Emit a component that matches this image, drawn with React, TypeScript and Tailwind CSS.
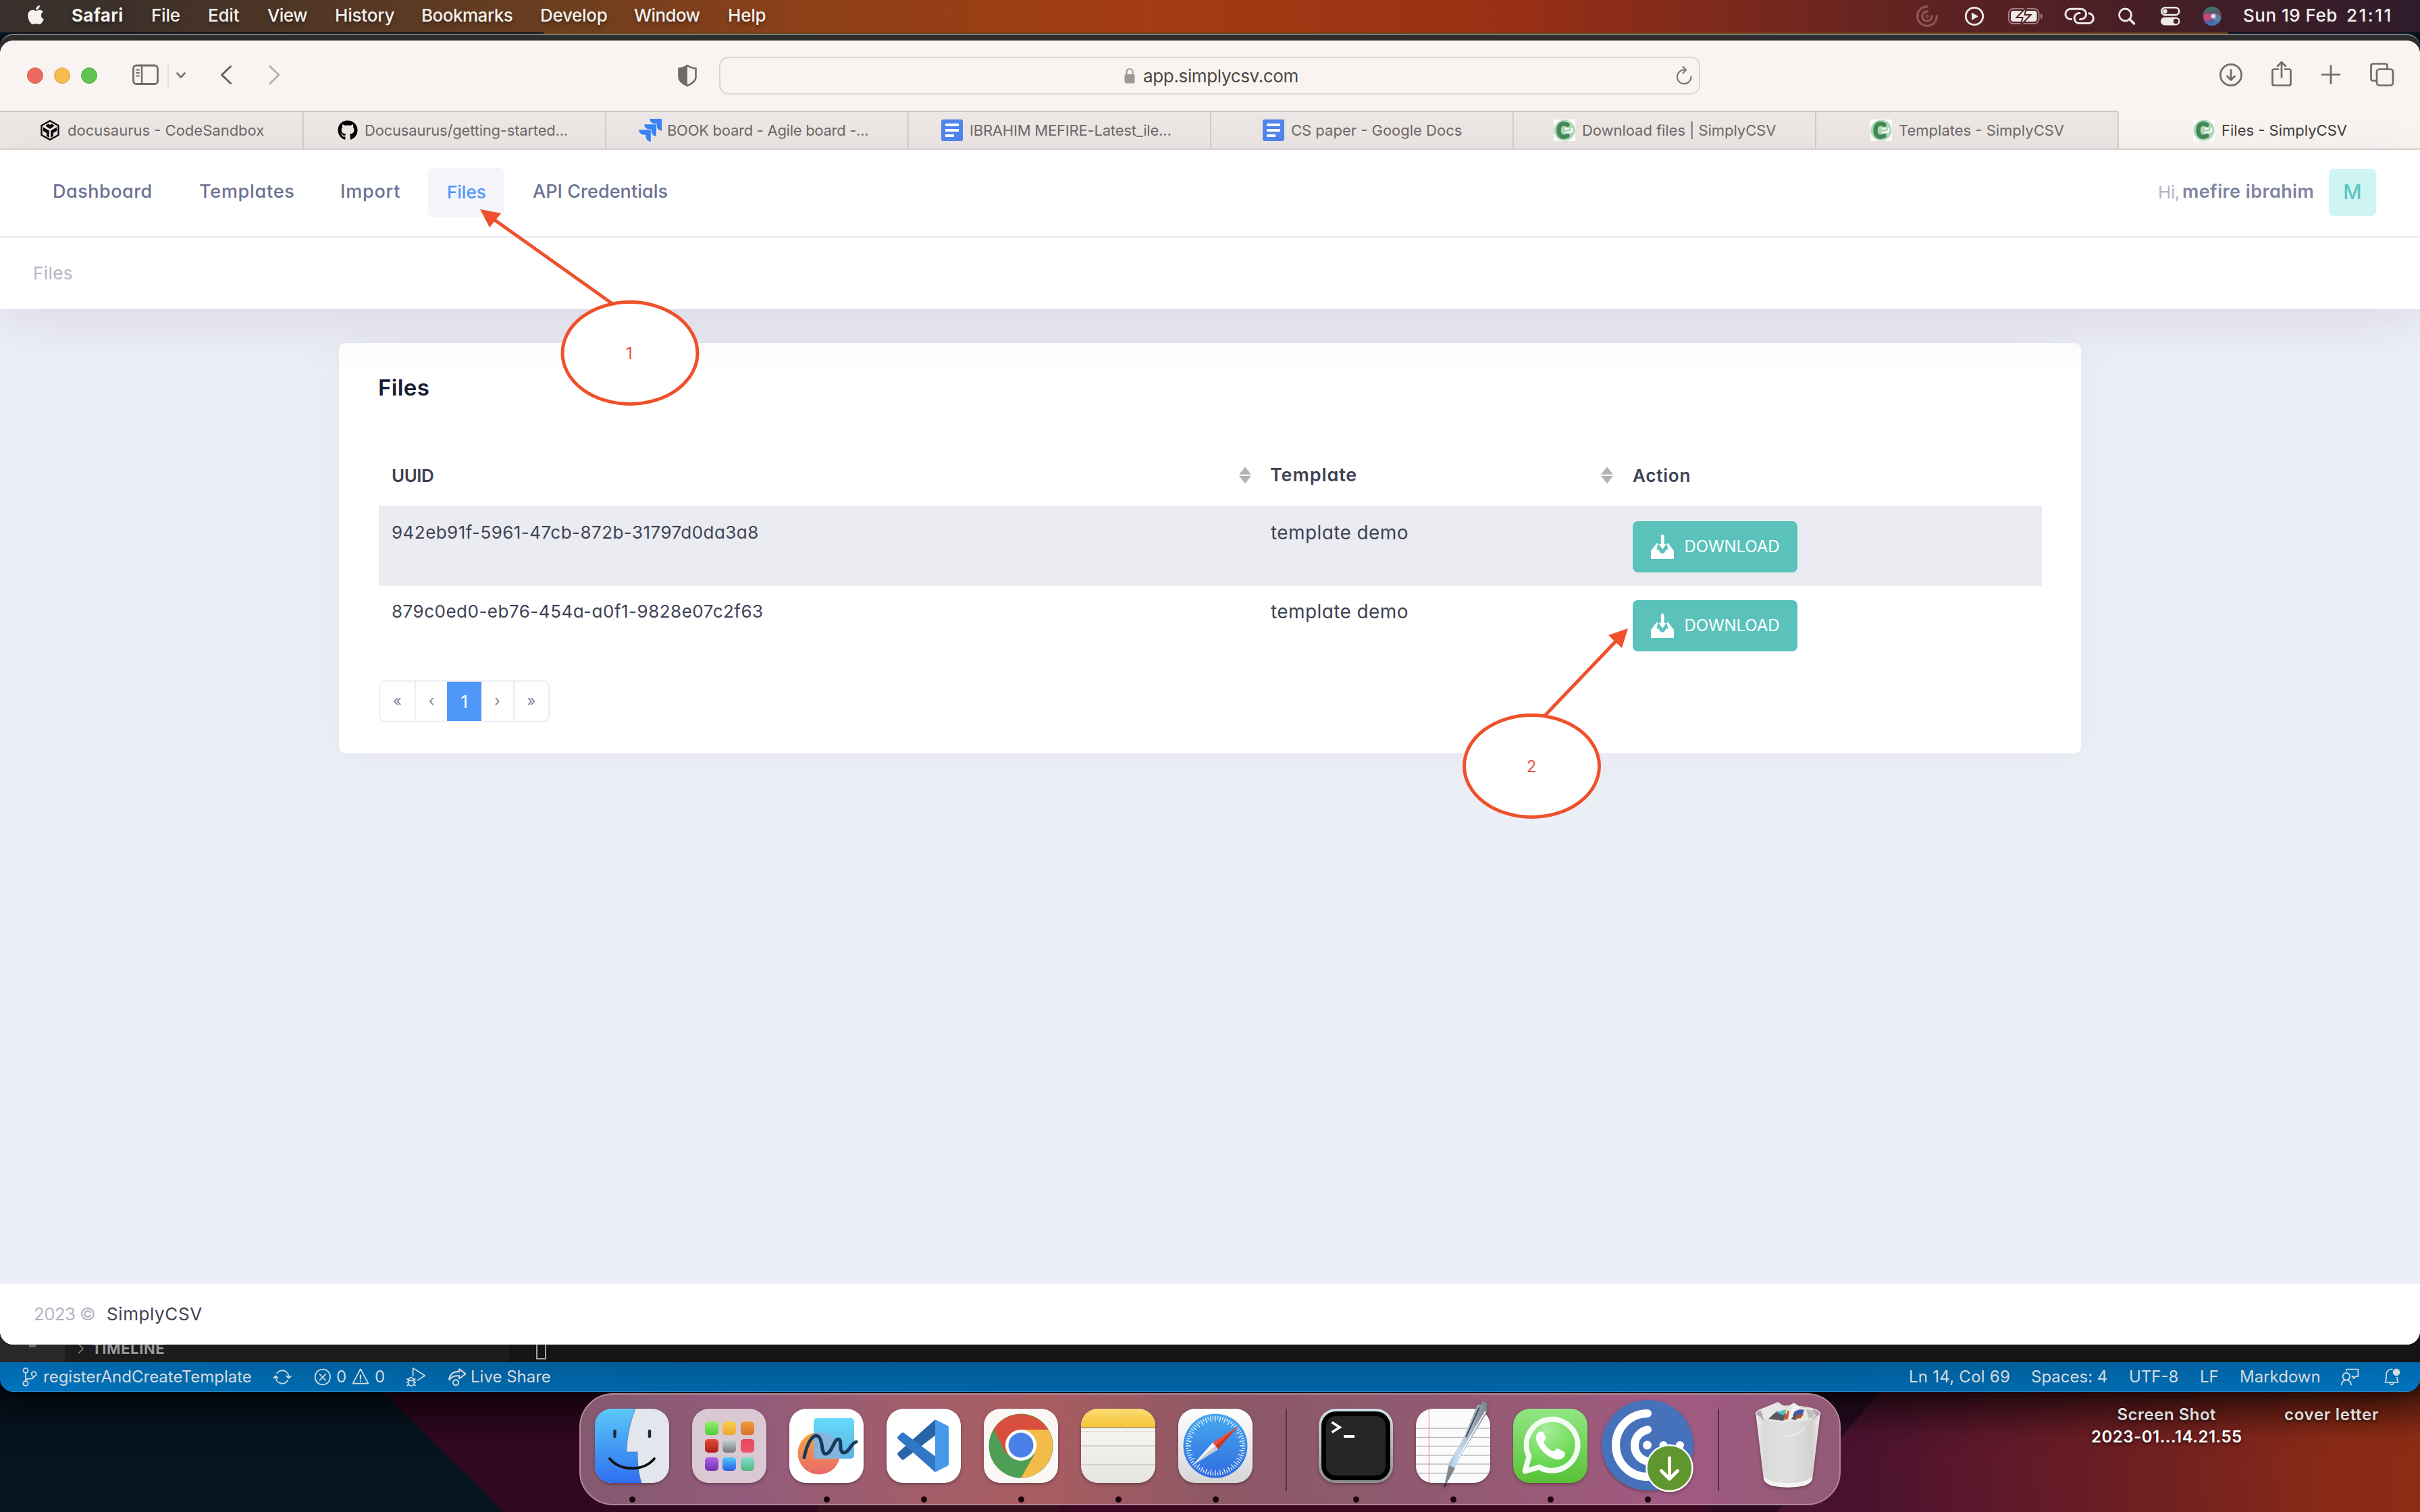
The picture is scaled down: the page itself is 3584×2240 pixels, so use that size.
import type { ReactNode } from "react";
import { FaApple, FaGithub } from "react-icons/fa";
import { SiJira } from "react-icons/si";
import {
  VscBellDot,
  VscChevronRight,
  VscDebugAlt,
  VscError,
  VscFeedback,
  VscLiveShare,
  VscSourceControl,
  VscSync,
  VscWarning,
} from "react-icons/vsc";

function Label({ className = "", children }: { className?: string; children: ReactNode }) {
  return <span className={"block shrink-0 whitespace-nowrap " + className}>{children}</span>;
}

/* ---------- Desktop ---------- */

function Wallpaper() {
  return (
    <svg className="absolute inset-0 h-full w-full" viewBox="0 0 3584 2240" fill="none">
      <defs>
        <linearGradient id="wall-right" gradientUnits="userSpaceOnUse" x1="2720" y1="2150" x2="3584" y2="2100">
          <stop offset="0" stopColor="#47112f" />
          <stop offset="0.25" stopColor="#5c182b" />
          <stop offset="0.55" stopColor="#702020" />
          <stop offset="0.85" stopColor="#8a2a17" />
          <stop offset="1" stopColor="#8c2c14" />
        </linearGradient>
        <linearGradient id="wall-shade" x1="0" y1="0" x2="0" y2="1">
          <stop offset="0" stopColor="#000" stopOpacity="0.62" />
          <stop offset="0.4" stopColor="#000" stopOpacity="0.25" />
          <stop offset="1" stopColor="#000" stopOpacity="0" />
        </linearGradient>
      </defs>
      <rect width="3584" height="2240" fill="#061421" />
      <path d="M805 48H3300V52H805Z" fill="#7c4a18" />
      <path d="M548 2040C610 2110 690 2180 745 2240H1212L1180 2040Z" fill="#300820" />
      <path d="M1212 2040H1568V2240H1212Z" fill="#37101b" />
      <path d="M1568 2040H2540V2240H1568Z" fill="#38071f" />
      <path d="M2500 2040L2530 2240H2640L2810 2040Z" fill="#2a0b22" />
      <path d="M2803 2040L2632 2240H3584V2040Z" fill="url(#wall-right)" />
      <rect y="2050" width="3584" height="80" fill="url(#wall-shade)" />
    </svg>
  );
}

/* ---------- Menu bar ---------- */

const menus: [string, string][] = [
  ["File", "ml-[41px] w-[43px] tracking-[-0.2px]"],
  ["Edit", "ml-[41px] w-[46px] tracking-[-0.2px]"],
  ["View", "ml-[42px] w-[58px] tracking-[-0.6px]"],
  ["History", "ml-[42px] w-[87px] tracking-[-0.2px]"],
  ["Bookmarks", "ml-[41px] w-[134px] tracking-[-0.5px]"],
  ["Develop", "ml-[42px] w-[98px] tracking-[-0.3px]"],
  ["Window", "ml-[41px] w-[96px] tracking-[-0.6px]"],
  ["Help", "ml-[43px] w-[56px] tracking-[-0.2px]"],
];

function StatusIcons() {
  return (
    <svg className="h-[48px] w-[460px] shrink-0" viewBox="2836 0 460 48" fill="none">
      <defs>
        <radialGradient id="siri" cx="0.5" cy="0.5" r="0.5">
          <stop offset="0" stopColor="#fff" />
          <stop offset="0.45" stopColor="#d9c8df" />
          <stop offset="1" stopColor="#5b4a86" stopOpacity="0" />
        </radialGradient>
        <linearGradient id="siri-base" x1="0.4" y1="0" x2="0.6" y2="1">
          <stop offset="0" stopColor="#35806a" />
          <stop offset="0.5" stopColor="#6b3f66" />
          <stop offset="1" stopColor="#3a7fd0" />
        </linearGradient>
      </defs>
      <g stroke="#8b5554" strokeWidth="3.4" strokeLinecap="round">
        <path d="M2854 9.700A14.300 14.300 0 1 0 2868.300 24" />
        <path d="M2854 17A7.200 7.200 0 1 0 2861.200 24" />
        <circle cx="2854" cy="24" r="0.8" />
      </g>
      <circle cx="2924" cy="24" r="12.700" stroke="#efe9e9" strokeWidth="2.800" />
      <path d="M2920 18.500v11.500l10-5.700z" fill="#efe9e9" />
      <rect x="2975" y="13" width="44.500" height="22" rx="6.500" stroke="#a07e80" strokeWidth="2" />
      <path d="M3022 20v8.500c2-.8 3-2.400 3-4.300s-1-3.500-3-4.200z" fill="#a07e80" />
      <rect x="2978" y="16" width="38.500" height="16" rx="4" fill="#efe9e9" />
      <path d="M3001 11L2986.500 26h9l-2.500 11L3007.500 22h-9z" fill="#efe9e9" stroke="#552224" strokeWidth="2" />
      <g stroke="#efe9e9" strokeWidth="3" strokeLinecap="round">
        <path d="M3067.500 28.500h-1a7.600 7.600 0 0 1 0-15.200h15.500a7.600 7.600 0 0 1 0 15.200h-1.500" />
        <path d="M3094 19.800a7.400 7.400 0 0 1-.5 14.700h-15a7.600 7.600 0 0 1 0-15h1.500" />
      </g>
      <circle cx="3147.500" cy="22" r="9" stroke="#efe9e9" strokeWidth="2.800" />
      <path d="M3154 28.500l6.500 6.500" stroke="#efe9e9" strokeWidth="3.600" strokeLinecap="round" />
      <rect x="3201.300" y="11.300" width="26" height="10.800" rx="5.400" stroke="#efe9e9" strokeWidth="2.600" />
      <circle cx="3206.500" cy="16.700" r="3.100" fill="#efe9e9" />
      <rect x="3200" y="25.500" width="28.500" height="12" rx="6" fill="#efe9e9" />
      <circle cx="3222.500" cy="31.500" r="3.700" fill="#45202a" />
      <circle cx="3276" cy="24" r="14" fill="url(#siri-base)" />
      <circle cx="3269.500" cy="25" r="6" fill="#e0467f" fillOpacity="0.8" />
      <circle cx="3283" cy="26" r="6" fill="#4fb0a9" fillOpacity="0.5" />
      <circle cx="3278" cy="24" r="6" fill="url(#siri)" />
    </svg>
  );
}

function MenuBar() {
  return (
    <header className="absolute inset-x-0 top-0 flex h-[48px] items-center bg-[linear-gradient(90deg,#38302c_0px,#3d302a_180px,#6a3e20_800px,#8c4018_1180px,#a53c13_1700px,#9c3014_2200px,#7d291c_2550px,#5c2222_2870px,#4a1f26_3120px,#2f1c2b_3584px)] text-[26px] text-[#f4f1ee]">
      <FaApple className="-mt-[4px] ml-[38px] h-[32px] w-[30px] shrink-0" />
      <div className="-mt-[3px] ml-[38px] flex items-center [text-shadow:0_3px_5px_rgba(0,0,0,0.4)]">
        <Label className="w-[77px] font-bold tracking-[0.3px]">Safari</Label>
        {menus.map(([name, box]) => (
          <Label key={name} className={box + " font-medium"}>{name}</Label>
        ))}
      </div>
      <div className="flex-1" />
      <StatusIcons />
      <div className="-mt-[3px] flex w-[288px] shrink-0 items-center font-medium">
        <Label className="ml-[26px] w-[140px] tracking-[0.5px]">Sun 19 Feb</Label>
        <Label className="ml-[13px] w-[72px] tracking-[2.500px]">21:11</Label>
      </div>
    </header>
  );
}

/* ---------- Editor window behind the browser ---------- */

function EditorWindow() {
  return (
    <div className="absolute top-[50px] left-0 flex h-[2012px] w-full flex-col overflow-hidden rounded-[20px] border-t-2 border-[#7d7d7d] bg-[#2d2d2d] shadow-[0_20px_60px_rgba(0,0,0,0.5)]">
      <div className="flex-1" />
      <div className="flex h-[56px] shrink-0 bg-[#151515]">
        <div className="flex w-[96px] justify-center bg-[#282828]">
          <span className="mt-[30px] h-[4px] w-[10px] bg-[#6b6b6b]" />
        </div>
        <div className="flex w-[658px] items-end bg-[#1c1c1c] pb-[8px] pl-[11px] text-[22px] font-bold text-[#9a9a9a]">
          <VscChevronRight className="h-[24px] w-[24px]" />
          <Label className="ml-[5px] w-[108px] leading-[24px] tracking-[0.6px]">TIMELINE</Label>
        </div>
        <div className="ml-[40px] h-[52px] w-[15px] border-2 border-[#a4a4a4]" />
      </div>
      <div className="flex h-[44px] shrink-0 items-center border-b border-[#2a86c4] bg-[linear-gradient(180deg,rgba(0,0,0,0.1),rgba(0,0,0,0)),linear-gradient(90deg,#0074c0_0px,#006db3_300px,#0066a8_1000px,#0064a5_1800px,#0066a8_2700px,#006db3_3300px,#0074c0_3584px)] text-[24px] text-[#d6dade]">
        <VscSourceControl className="ml-[30px] h-[28px] w-[28px]" />
        <Label className="ml-[6px] w-[310px]">registerAndCreateTemplate</Label>
        <VscSync className="ml-[30px] h-[28px] w-[28px]" />
        <VscError className="ml-[32px] h-[28px] w-[28px]" />
        <Label className="ml-[6px] w-[18px]">0</Label>
        <VscWarning className="ml-[4px] h-[28px] w-[28px]" />
        <Label className="ml-[7px] w-[18px]">0</Label>
        <VscDebugAlt className="ml-[29px] h-[28px] w-[28px]" />
        <VscLiveShare className="ml-[33px] h-[28px] w-[28px]" />
        <Label className="ml-[6px] w-[120px]">Live Share</Label>
        <div className="flex-1" />
        <Label className="w-[152px] tracking-[0.25px]">Ln 14, Col 69</Label>
        <Label className="ml-[29px] w-[114px]">Spaces: 4</Label>
        <Label className="ml-[31px] w-[74px]">UTF-8</Label>
        <Label className="ml-[31px] w-[30px]">LF</Label>
        <Label className="ml-[29px] w-[120px]">Markdown</Label>
        <VscFeedback className="ml-[30px] h-[28px] w-[28px]" />
        <VscBellDot className="mr-[28px] ml-[33px] h-[28px] w-[28px]" />
      </div>
    </div>
  );
}

/* ---------- Browser chrome ---------- */

function BrowserToolbar() {
  return (
    <div className="flex h-[104px] shrink-0 items-center bg-[#f9f4f1]">
      <div className="ml-[40px] flex gap-[16px]">
        <span className="h-[24px] w-[24px] rounded-full border border-[#d8584c] bg-[#ed6a5e]" />
        <span className="h-[24px] w-[24px] rounded-full border border-[#dba23c] bg-[#f4bd4e]" />
        <span className="h-[24px] w-[24px] rounded-full border border-[#51ab42] bg-[#61c454]" />
      </div>
      <svg className="ml-[50px] h-[48px] w-[230px] shrink-0" viewBox="194 88 230 48" fill="none" strokeLinecap="round" strokeLinejoin="round">
        <g stroke="#6f6b68">
          <rect x="197.500" y="97" width="36" height="27.500" rx="4.500" strokeWidth="2.800" />
          <path d="M210 97v27.500" strokeWidth="2.400" />
          <path d="M202 103.500h4M202 108h4M202 112.500h4" strokeWidth="2" />
        </g>
        <path d="M249 94v36" stroke="#e4dfdc" strokeWidth="2" strokeLinecap="butt" />
        <path d="M262.500 108.500l5.500 6 5.500-6" stroke="#7c7875" strokeWidth="2.800" />
        <path d="M341.500 98.500L328.500 111l13 12.500" stroke="#65615f" strokeWidth="3" />
        <path d="M400 98.500l13 12.500-13 12.500" stroke="#b5b1ae" strokeWidth="3" />
      </svg>
      <div className="flex-1" />
      <svg className="mr-[32px] h-[34px] w-[30px] shrink-0" viewBox="0 0 30 34" fill="none">
        <path d="M15 2c4 3 8.500 4 12.500 4.500v13c0 6-6 9.500-12.500 12.500C8.500 29 2.500 25.500 2.500 19.500v-13C6.500 6 11 5 15 2z" stroke="#6f6b68" strokeWidth="2.600" />
        <path d="M15 2v30C8.500 29 2.500 25.500 2.500 19.500v-13C6.500 6 11 5 15 2z" fill="#6f6b68" />
      </svg>
      <div className="flex h-[56px] w-[1453px] shrink-0 items-center rounded-[14px] border-2 border-[#dcd6d3]">
        <svg className="ml-[597px] h-[24px] w-[18px]" viewBox="0 0 18 24" fill="none">
          <path d="M4.500 11V6.500a4.500 4.500 0 0 1 9 0V11" stroke="#9d9997" strokeWidth="2.200" />
          <rect x="1.500" y="10" width="15" height="13.500" rx="2.500" fill="#9d9997" />
        </svg>
        <Label className="ml-[11px] w-[230px] text-[26px] tracking-[-0.35px] text-[#4a4745]">app.simplycsv.com</Label>
        <svg className="mr-[9px] ml-auto h-[28px] w-[26px]" viewBox="0 0 26 28" fill="none" stroke="#7c7875" strokeWidth="2.200" strokeLinecap="round" strokeLinejoin="round">
          <path d="M23.500 15.500A10.300 10.300 0 1 1 13 5.500h2.500" />
          <path d="M11.500 1l4.500 4.500-4.500 4.800" />
        </svg>
      </div>
      <svg className="mr-[34px] ml-[764px] h-[48px] w-[268px] shrink-0" viewBox="3282 88 268 48" fill="none" stroke="#6f6b68" strokeWidth="2.700" strokeLinecap="round" strokeLinejoin="round">
        <circle cx="3304" cy="111" r="15.600" />
        <path d="M3304 103.500v14.500M3298.500 113l5.500 5.500 5.500-5.500" />
        <path d="M3374 102.500h-6q-2.500 0-2.500 2.500v19q0 2.500 2.500 2.500h22q2.500 0 2.500-2.500v-19q0-2.500-2.500-2.500h-6" />
        <path d="M3379 114.500V92.500M3373 98l6-6 6 6" />
        <path d="M3439 110.500h26M3452 97.500v26" />
        <rect x="3520" y="102.500" width="24" height="24" rx="4" />
        <path d="M3519.500 119.500h-5q-3 0-3-3v-19q0-3 3-3h18q3 0 3 3v4.500" />
      </svg>
    </div>
  );
}

function SandboxIcon() {
  return (
    <svg className="h-[32px] w-[32px] shrink-0" viewBox="0 0 32 32" fill="none">
      <path d="M16 2L28.500 9v14L16 30 3.500 23V9Z" stroke="#0a0a0a" strokeWidth="2.400" strokeLinejoin="round" />
      <path d="M10 8.500l3.500-2 2.500 1.500 2.500-1.500 3.500 2v1.500L16 14l-6-4z" fill="#0a0a0a" />
      <path d="M6 11.500L14.800 16.500V27L11 24.500V20L6 17ZM26 11.500L17.200 16.500V27L21 24.500V20L26 17Z" fill="#0a0a0a" />
    </svg>
  );
}

function DocsIcon() {
  return (
    <svg className="h-[32px] w-[32px] shrink-0" viewBox="0 0 32 32">
      <rect width="32" height="32" rx="3" fill="#4f86ec" />
      <path d="M6 6h20v4H6zM6 14h20v4H6zM6 22h13v4H6z" fill="#fff" />
    </svg>
  );
}

function CsvIcon() {
  return (
    <svg className="h-[32px] w-[32px] shrink-0" viewBox="0 0 32 32" fill="none">
      <rect width="32" height="32" fill="#fff" />
      <circle cx="16" cy="16" r="15.500" fill="#b2d8ba" />
      <path d="M20.500 8C12.500 3.500 7.500 8.500 7.500 16s5 12.500 13 8" stroke="#438a55" strokeWidth="6.500" strokeLinecap="round" />
      <path d="M17 13q3 1 5.500 0M17 19q6 1 10-1.500v-5" stroke="#fff" strokeWidth="2.600" />
    </svg>
  );
}

const tabs: { title: string; pad: string; text: string; icon: ReactNode }[] = [
  { title: "docusaurus - CodeSandbox", pad: "pl-[58px]", text: "ml-[10px] w-[292px]", icon: <SandboxIcon /> },
  { title: "Docusaurus/getting-started...", pad: "pl-[49px]", text: "ml-[9px] w-[302px] tracking-[-0.2px]", icon: <FaGithub className="h-[30px] w-[32px] shrink-0 text-black" /> },
  { title: "BOOK board - Agile board -...", pad: "pl-[48px]", text: "ml-[8px] w-[300px] tracking-[-0.28px]", icon: <SiJira className="h-[34px] w-[34px] shrink-0 text-[#3b84f7]" /> },
  { title: "IBRAHIM MEFIRE-Latest_ile...", pad: "pl-[48px]", text: "ml-[10px] w-[300px] tracking-[-0.2px]", icon: <DocsIcon /> },
  { title: "CS paper - Google Docs", pad: "pl-[76px]", text: "ml-[10px] w-[255px]", icon: <DocsIcon /> },
  { title: "Download files | SimplyCSV", pad: "pl-[59px]", text: "ml-[10px] w-[289px] tracking-[-0.05px]", icon: <CsvIcon /> },
  { title: "Templates - SimplyCSV", pad: "pl-[80px]", text: "ml-[10px] w-[246px]", icon: <CsvIcon /> },
  { title: "Files - SimplyCSV", pad: "pl-[110px]", text: "ml-[10px] w-[186px]", icon: <CsvIcon /> },
];

function TabStrip() {
  return (
    <div className="flex h-[58px] shrink-0 border-b-2 border-[#d9d4d2] bg-[#f9f4f1]">
      {tabs.map((tab, i) => (
        <div
          key={tab.title}
          className={
            "flex w-[448px] items-center border-t-2 text-[22px] " +
            tab.pad +
            (i > 0 ? " border-l-2 border-l-[#d3cdca]" : "") +
            (i === 7
              ? " border-t-transparent text-[#3f3c3a]"
              : " border-t-[#cbc5c2] bg-[#ece7e4] text-[#6d6967]")
          }
        >
          {tab.icon}
          <Label className={tab.text}>{tab.title}</Label>
        </div>
      ))}
    </div>
  );
}

/* ---------- Web page ---------- */

function PageHeader() {
  return (
    <div className="relative z-10 flex h-[236px] shrink-0 flex-col bg-white shadow-[0_20px_70px_rgba(82,63,105,0.12)]">
      <nav className="flex h-[130px] items-center border-b-2 border-[#ebedf3] pb-[3px] text-[27px] font-medium text-[#6c7293]">
        <Label className="ml-[78px] w-[148px] tracking-[0.5px]">Dashboard</Label>
        <Label className="ml-[69px] w-[142px] tracking-[0.75px]">Templates</Label>
        <Label className="ml-[67px] w-[90px] tracking-[0.8px]">Import</Label>
        <div className="ml-[40px] flex h-[72px] w-[113px] items-center rounded-[8px] bg-[#f4f4fa] pl-[28px] text-[26px] text-[#5097f6]">
          <Label className="w-[57px]">Files</Label>
        </div>
        <Label className="ml-[42px] w-[200px] tracking-[0.05px]">API Credentials</Label>
        <div className="flex-1" />
        <Label className="w-[32px] text-[26px] font-normal tracking-[-0.4px] text-[#b5b5c3]">Hi,</Label>
        <Label className="ml-[4px] w-[201px] tracking-[0.4px] font-semibold text-[#7f83a2]">mefire ibrahim</Label>
        <div className="mr-[65px] ml-[16px] flex h-[70px] w-[70px] items-center justify-center rounded-[8px] bg-[#cff5f3] text-[30px] text-[#5bc5bd]">
          M
        </div>
      </nav>
      <div className="flex h-[106px] items-center pb-[1px] pl-[49px] text-[26px] text-[#b5b5c3]">
        <Label className="w-[59px] tracking-[0.4px]">Files</Label>
      </div>
    </div>
  );
}

function SortIcon() {
  return (
    <svg className="h-[26px] w-[18px]" viewBox="0 0 18 26" fill="#b3b3b3">
      <path d="M9 0.500L18 12H0zM9 25.500L0 14h18z" />
    </svg>
  );
}

function InboxDownIcon() {
  return (
    <svg className="h-[36px] w-[34px] shrink-0" viewBox="0 0 34 36" fill="#fff">
      <path d="M14.800 2.500a2.400 2.400 0 0 1 4.800 0V14h3.200l-5.600 8-5.600-8h3.200z" />
      <path d="M8.500 13L0 24v11a1.500 1.500 0 0 0 1.500 1h31a1.500 1.500 0 0 0 1.500-1V24l-8.500-11h-2.200l2.300 9.500h-3.500c-.5 3-2.300 5.300-5.100 5.300s-4.600-2.300-5.100-5.300H8.300L10.700 13z" />
    </svg>
  );
}

function FileRow({ uuid, striped }: { uuid: string; striped: boolean }) {
  return (
    <div
      className={
        "grid grid-cols-[1301px_536px_626px] text-[26px] leading-[38px] text-[#3f4254] " +
        (striped ? "h-[119px] bg-[#ebecf2] pt-[21px]" : "h-[117px] pt-[19px]")
      }
    >
      <div className="pl-[19px]">
        <Label className={striped ? "w-[545px] tracking-[0.450px]" : "w-[551px] tracking-[0.5px]"}>{uuid}</Label>
      </div>
      <div className="pl-[20px]"><Label className="w-[207px] text-[28px] tracking-[0.4px]">template demo</Label></div>
      <div className="pt-[2px] pl-[20px]">
        <button className="flex h-[76px] w-[244px] items-center rounded-[8px] bg-[#5bc2bb] pl-[27px] text-[24px] text-white">
          <InboxDownIcon />
          <Label className="ml-[15px] w-[142px] tracking-[-0.1px]">DOWNLOAD</Label>
        </button>
      </div>
    </div>
  );
}

function Pagination() {
  return (
    <div className="mt-[23px] flex h-[62px] w-[253px] items-center overflow-hidden rounded-[10px] border-2 border-[#ebedf3] text-[22px] text-[#7e8299]">
      <span className="flex h-full w-[53px] items-center justify-center border-r-2 border-[#ebedf3] pb-[2px]">«</span>
      <span className="flex h-full w-[46px] items-center justify-center pb-[2px]">‹</span>
      <span className="-my-[2px] flex h-[62px] w-[51px] shrink-0 items-center justify-center bg-[#4f97f8] text-[26px] text-white">1</span>
      <span className="flex h-full w-[49px] items-center justify-center border-r-2 border-[#ebedf3] pb-[2px]">›</span>
      <span className="flex h-full flex-1 items-center justify-center pb-[2px]">»</span>
    </div>
  );
}

function FilesCard() {
  return (
    <section className="mt-[50px] ml-[502px] h-[608px] w-[2580px] shrink-0 rounded-[10px] bg-white pr-[58px] pl-[59px] shadow-[0_0_75px_rgba(82,63,105,0.06)]">
      <h1 className="flex h-[132px] items-center pt-[2px] text-[33px] font-semibold text-[#181c32]">
        <Label className="-ml-[1px] w-[77px] tracking-[0.4px]">Files</Label>
      </h1>
      <div className="mt-[19px] grid h-[90px] grid-cols-[1301px_536px_626px] items-center text-[26px] font-semibold text-[#3f4254]">
        <div className="flex items-center justify-between pr-[9px] pl-[19px]"><Label className="w-[63px] tracking-[-0.5px]">UUID</Label><SortIcon /></div>
        <div className="flex items-center justify-between pr-[9px] pl-[19px]"><Label className="w-[129px] text-[27px] tracking-[0.9px]">Template</Label><SortIcon /></div>
        <div className="pl-[20px]"><Label className="w-[87px] tracking-[0.8px]">Action</Label></div>
      </div>
      <FileRow uuid="942eb91f-5961-47cb-872b-31797d0da3a8" striped />
      <FileRow uuid="879c0ed0-eb76-454a-a0f1-9828e07c2f63" striped={false} />
      <Pagination />
    </section>
  );
}

function BrowserWindow() {
  return (
    <main className="absolute top-[60px] left-0 flex h-[1932px] w-full flex-col overflow-hidden rounded-[20px] bg-[#edeff7] shadow-[0_0_2px_rgba(0,0,0,0.8)]">
      <BrowserToolbar />
      <TabStrip />
      <div className="flex flex-1 flex-col [font-feature-settings:'cv11'_1]">
        <PageHeader />
        <FilesCard />
        <div className="flex-1" />
        <footer className="flex h-[90px] shrink-0 items-center bg-white pb-[1px] pl-[50px] text-[26px]">
          <Label className="w-[91px] tracking-[-0.7px] text-[#b5b5c3]">2023 ©</Label>
          <Label className="ml-[17px] w-[143px] tracking-[0.6px] text-[#3f4254]">SimplyCSV</Label>
        </footer>
      </div>
    </main>
  );
}

/* ---------- Callouts ---------- */

function Callouts() {
  return (
    <svg className="absolute inset-0 z-20 h-full w-full" viewBox="0 0 3584 2240" fill="none">
      <g stroke="#ee512c" strokeWidth="5">
        <path d="M730 324L907 450M2394 949L2287 1061" />
        <ellipse cx="933" cy="523" rx="100" ry="75.500" fill="#fff" />
        <ellipse cx="2268.500" cy="1135" rx="100" ry="75.500" fill="#fff" />
      </g>
      <path d="M711 310L742 316L734 326L725 337Z" fill="#ee512c" />
      <path d="M2411 931L2382 941L2391 950L2402 960Z" fill="#ee512c" />
      <g fill="#e8503f" fontSize="24" textAnchor="middle" fontFamily="Inter, sans-serif">
        <text x="932" y="531.500">1</text>
        <text x="2268" y="1143.500">2</text>
      </g>
    </svg>
  );
}

/* ---------- Dock ---------- */

function FinderIcon() {
  return (
    <svg viewBox="0 0 110 110" fill="none" className="h-[110px] w-[110px] overflow-hidden rounded-[25px]">
      <defs>
        <linearGradient id="finder" x1="0" y1="0" x2="0" y2="1"><stop stopColor="#5ac8f8" /><stop offset="1" stopColor="#2f6ff0" /></linearGradient>
      </defs>
      <rect width="110" height="110" fill="#e3e6ec" />
      <path d="M0 0H60C52 20 47 42 47 64H63C63 82 65 98 69 110H0Z" fill="url(#finder)" />
      <path d="M60 0C52 20 47 42 47 64H63C63 82 65 98 69 110" stroke="#2c5b9c" strokeOpacity="0.5" strokeWidth="1.200" />
      <path d="M29.500 33v8M81 33v8" stroke="#1c2b3c" strokeWidth="4.500" strokeLinecap="round" />
      <path d="M22 74C38 93 72 93 88 74" stroke="#121212" strokeWidth="3.800" strokeLinecap="round" />
    </svg>
  );
}

function LaunchpadIcon() {
  return (
    <div className="grid h-[110px] w-[110px] grid-cols-[20px_20px_20px] grid-rows-[20px_20px_20px] content-center justify-center gap-[6.500px] rounded-[25px] bg-[#dac8d2]">
      <span className="rounded-[5px] bg-[linear-gradient(#93f06c,#52cb3d)]" />
      <span className="rounded-[5px] bg-[linear-gradient(#f5cf48,#efa636)]" />
      <span className="rounded-[5px] bg-[linear-gradient(#eda03a,#d8702e)]" />
      <span className="rounded-[5px] bg-[linear-gradient(#e24a3c,#ae1f18)]" />
      <span className="rounded-[5px] bg-[linear-gradient(#ccd6da,#767877)]" />
      <span className="rounded-[5px] bg-[linear-gradient(#e9455f,#e8586d)]" />
      <span className="rounded-[5px] bg-[linear-gradient(#b160e4,#7432b0)]" />
      <span className="rounded-[5px] bg-[linear-gradient(#4fcbfa,#2b5de6)]" />
      <span className="rounded-[5px] bg-[linear-gradient(#83dccb,#52b77f)]" />
    </div>
  );
}

function FreeformIcon() {
  return (
    <svg viewBox="0 0 110 110" fill="none" className="h-[110px] w-[110px] overflow-hidden rounded-[25px] bg-white">
      <defs>
        <linearGradient id="ff-sq" x1="0" y1="0" x2="0" y2="1"><stop stopColor="#62dafb" /><stop offset="1" stopColor="#64b2df" /></linearGradient>
        <linearGradient id="ff-c" x1="0" y1="0" x2="0" y2="1"><stop stopColor="#f6a93b" /><stop offset="1" stopColor="#e9686c" /></linearGradient>
      </defs>
      <circle cx="44" cy="66" r="31.500" fill="url(#ff-c)" />
      <rect x="36" y="14" width="60" height="60" rx="5" fill="url(#ff-sq)" />
      <path d="M36 36A31.500 31.500 0 0 1 74.500 74H41q-5 0-5-5z" fill="#86b2dc" />
      <path d="M22 72C27 48 36 36 43 41C51 47 46 67 54 67C63 67 66 44 73 45C79 47 72 65 81 65C89 65 90 52 99 49" stroke="#173a5c" strokeWidth="5" strokeLinecap="round" />
    </svg>
  );
}

function CodeIcon() {
  return (
    <svg viewBox="0 0 110 110" className="h-[110px] w-[110px] overflow-hidden rounded-[25px] bg-white">
      <path d="M72 16L17 65q-2 2 0 4l5 6q2 1.500 4 0L74 38z" fill="#2765a8" />
      <path d="M72 94L17 45q-2-2 0-4l5-5q2-1.500 4 0L74 72z" fill="#3077c6" />
      <path d="M72 16L90 25q2 1 2 3V82q0 2-2 3L72 94Z" fill="#4698ea" />
    </svg>
  );
}

function ChromeIcon() {
  return (
    <svg viewBox="0 0 110 110" className="h-[110px] w-[110px] overflow-hidden rounded-[25px] bg-[#faf7f5]">
      <circle cx="55" cy="55" r="47.500" fill="#4f9e55" />
      <path d="M55 31H95.500A47.500 47.500 0 0 1 55 102.500L75.500 67Z" fill="#f3bc48" />
      <path d="M55 55L33 67L14.500 30.500A47.500 47.500 0 0 1 95.500 31H55Z" fill="#d94f3d" />
      <circle cx="55" cy="54" r="23" fill="#fff" />
      <circle cx="55" cy="54" r="18.500" fill="#4a80ea" />
    </svg>
  );
}

function NotesIcon() {
  return (
    <div className="flex h-[110px] w-[110px] flex-col overflow-hidden rounded-[25px] bg-[linear-gradient(180deg,#fdfdfc,#e6e4df)]">
      <div className="h-[29px] shrink-0 border-b-2 border-[#b8a464] bg-[linear-gradient(180deg,#fbdc72,#f6c53b)]" />
      <div className="mt-[4px] border-t-2 border-dotted border-[#c9c7c3]" />
      <div className="mt-[19px] border-t-2 border-[#d3d1cc]" />
      <div className="mt-[26px] border-t-2 border-[#d3d1cc]" />
    </div>
  );
}

function SafariIcon() {
  const ticks = Array.from({ length: 72 }, (_, i) => i * 5);
  return (
    <svg viewBox="0 0 110 110" className="h-[110px] w-[110px] overflow-hidden rounded-[25px]">
      <defs>
        <linearGradient id="saf-bg" x1="0" y1="0" x2="0" y2="1"><stop stopColor="#fff" /><stop offset="1" stopColor="#d6d6d6" /></linearGradient>
        <linearGradient id="saf" x1="0" y1="0" x2="0" y2="1"><stop stopColor="#47aaf0" /><stop offset="1" stopColor="#2f6be0" /></linearGradient>
      </defs>
      <rect width="110" height="110" fill="url(#saf-bg)" />
      <circle cx="55" cy="55" r="47.500" fill="url(#saf)" />
      <g stroke="#e9f3fc" strokeWidth="1.300">
        {ticks.map((a) => (
          <path key={a} d={a % 10 ? "M55 11v4.500" : "M55 11v8"} transform={"rotate(" + a + " 55 55)"} />
        ))}
      </g>
      <path d="M89 26L51 50L59 60Z" fill="#e8513f" />
      <path d="M21 84L51 50L59 60Z" fill="#f4f6f8" />
      <path d="M21 84L55 55L59 60Z" fill="#c4cad0" />
      <path d="M89 26L55 55L59 60Z" fill="#c23b2e" />
    </svg>
  );
}

function TerminalIcon() {
  return (
    <div className="h-[110px] w-[110px] rounded-[25px] bg-[linear-gradient(180deg,#d3e0e9,#8e8f92)] p-[4px]">
      <div className="h-full w-full rounded-[21px] bg-black p-[7px]">
        <svg viewBox="0 0 88 88" className="h-[88px] w-[88px] rounded-[14px] bg-[#262626]" fill="none" stroke="#fff">
          <path d="M8.500 9l11.500 7.500-11.500 7.500" strokeWidth="3.800" />
          <path d="M26 30h16" strokeWidth="3.800" />
        </svg>
      </div>
    </div>
  );
}

function TextEditIcon() {
  return (
    <svg viewBox="0 -14 110 134" className="-mt-[14px] -mb-[10px] h-[134px] w-[110px]" fill="none">
      <defs>
        <linearGradient id="pen" x1="0" y1="0" x2="1" y2="0.300"><stop stopColor="#6f8aa6" /><stop offset="0.450" stopColor="#c7dcee" /><stop offset="1" stopColor="#6c6f76" /></linearGradient>
      </defs>
      <rect width="110" height="110" rx="25" fill="#fbfbfb" />
      <path d="M0 29h110M0 42.500h110M0 55.500h110M0 69h110M0 82h110M2 95.500h106" stroke="#b9bbbd" strokeWidth="1.600" />
      <path d="M19.500 1v108" stroke="#f0b0b0" strokeWidth="1.600" />
      <path d="M91-6l6 0 1-5 8 2-1 8 1 5L64 74 56 92 42 117 43 108 49 80 72 40z" fill="url(#pen)" />
      <path d="M49 84L42 117L58 88Z" fill="#81868d" />
      <path d="M94-2L74 42" stroke="#42505e" strokeWidth="2" />
      <path d="M103 4L64 70" stroke="#eef4f9" strokeWidth="2" />
      <path d="M41 118l2-8 3 1z" fill="#222" />
    </svg>
  );
}

function WhatsAppIcon() {
  return (
    <svg viewBox="0 0 110 110" className="h-[110px] w-[110px] overflow-hidden rounded-[25px]" fill="none">
      <defs>
        <linearGradient id="wa" x1="0" y1="0" x2="0" y2="1"><stop stopColor="#8fe783" /><stop offset="1" stopColor="#58c136" /></linearGradient>
        <radialGradient id="wa-in" cx="0.4" cy="0.2" r="0.9"><stop stopColor="#a4ee98" /><stop offset="1" stopColor="#55cf37" /></radialGradient>
      </defs>
      <rect width="110" height="110" fill="url(#wa)" />
      <path d="M17.500 92.500l6-22A38 38 0 1 1 38.500 86.500z" fill="url(#wa-in)" stroke="#f4fbf3" strokeWidth="8" strokeLinejoin="round" />
      <path d="M38.500 34.500c-3.500 1.500-5.500 6-4.500 11 3 13 16 26.500 29.500 29.500 5 1 10.500-1 12.500-5 1-2.500.8-5-.5-6l-8-4.500c-1.500-.8-3.200-.6-4.300.7l-2.500 3C55 62.500 48 56 45 49l2.500-3c1-1 1.200-2.500.7-4l-3.500-6.500c-1.200-2-3.700-2-6.200-1z" fill="#fff" />
    </svg>
  );
}

function ChatSyncIcon() {
  return (
    <svg viewBox="0 0 136 137" className="-mt-[13px] -mb-[14px] h-[137px] w-[136px]" fill="none">
      <ellipse cx="68" cy="67" rx="68" ry="67" fill="#4672bc" />
      <g stroke="#fff" strokeWidth="12" strokeLinecap="round">
        <path d="M68 20A47 47 0 0 0 68 114" />
        <path d="M68 44A24 24 0 0 0 68 91" />
      </g>
      <circle cx="67.500" cy="67" r="6.500" fill="#fff" />
      <circle cx="91.500" cy="67" r="6" fill="#fff" />
      <circle cx="116" cy="67" r="6" fill="#fff" />
      <circle cx="100.500" cy="101" r="34" fill="#5f962d" stroke="#fff" strokeWidth="2.500" />
      <path d="M100.500 86v30M88.500 105l12 12 12-12" stroke="#fff" strokeWidth="5" strokeLinecap="round" strokeLinejoin="round" />
    </svg>
  );
}

function TrashIcon() {
  return (
    <svg viewBox="0 0 98 128" className="-mt-[11px] -mb-[7px] h-[128px] w-[98px]" fill="none">
      <defs>
        <linearGradient id="bin" x1="0" y1="0" x2="1" y2="0">
          <stop stopColor="#efefef" /><stop offset="0.120" stopColor="#dadada" /><stop offset="0.500" stopColor="#e0e0de" /><stop offset="0.880" stopColor="#d3d2d1" /><stop offset="1" stopColor="#efefef" />
        </linearGradient>
      </defs>
      <ellipse cx="49" cy="18" rx="47.500" ry="11" fill="#b7a5ae" stroke="#e9e2e6" strokeWidth="1.500" />
      <path d="M8 12l14-6 12-5 12 8 12-7 10 7 16 2 6 10-8 10-66 2z" fill="#e6e6e6" />
      <path d="M20 26l12-11 14 3-4 11zM64 12l8 4-12 12-6-2z" fill="#59595b" />
      <path d="M32 16l14-4-4 9z" fill="#4fc0d8" />
      <path d="M42 14l5-2-3 8z" fill="#89c455" />
      <path d="M48 15l3-2-2 13-7 2z" fill="#cf5a3c" />
      <path d="M60 10l13 3-3 8-14 1z" fill="#3d5aa0" />
      <path d="M62 20l10-1-4 6-8 1z" fill="#b3552c" />
      <path d="M76 12l10 2 2 9-8 3z" fill="#bdbdbd" />
      <path d="M50 28l7-24 12 7-10 4z" fill="#f7f7f7" fillOpacity="0.900" />
      <path d="M1.500 20C10 29 30 31 49 31S88 29 96.500 20L85 116q-2 6-12 9-24 5-48 0-10-3-12-9Z" fill="url(#bin)" />
      <path d="M13.500 112q10 9 35.500 9t35.500-9l-.5 5q-3 5-11 8-24 5-48 0-8-3-11-8z" fill="#fafafa" fillOpacity="0.8" />
      <path d="M36 52c14 1 28-4 38-16 0 10-14 20-38 16z" fill="#f1f1f1" fillOpacity="0.700" />
    </svg>
  );
}

function DockItem({ open, children }: { open: boolean; children: ReactNode }) {
  return (
    <div className="flex shrink-0 flex-col items-center">
      <div className="drop-shadow-[0_2px_2px_rgba(0,0,0,0.3)]">{children}</div>
      <span className={"mt-[20px] h-[9px] w-[9px] rounded-full " + (open ? "bg-[#1b0208]" : "bg-transparent")} />
    </div>
  );
}

function Dock() {
  return (
    <div className="absolute top-[2064px] left-[858px] flex h-[166px] w-[1868px] items-start rounded-[50px] border-2 border-[#b3889c] bg-[linear-gradient(90deg,#85596f_0px,#935b7b_250px,#a25e68_520px,#a95d60_680px,#8d5866_950px,#8d5a6d_1150px,#985a76_1400px,#a15a82_1620px,#925a75_1864px)] pt-[21px] pl-[21px]">
      <div className="flex gap-[34px]">
        <DockItem open><FinderIcon /></DockItem>
        <DockItem open={false}><LaunchpadIcon /></DockItem>
        <DockItem open><FreeformIcon /></DockItem>
        <DockItem open><CodeIcon /></DockItem>
        <DockItem open><ChromeIcon /></DockItem>
        <DockItem open><NotesIcon /></DockItem>
        <DockItem open><SafariIcon /></DockItem>
      </div>
      <div className="ml-[49px] h-[122px] w-[2px] bg-[#5c2a42]" />
      <div className="ml-[47px] flex gap-[34px]">
        <DockItem open><TerminalIcon /></DockItem>
        <DockItem open><TextEditIcon /></DockItem>
        <DockItem open><WhatsAppIcon /></DockItem>
      </div>
      <div className="ml-[21px]"><DockItem open><ChatSyncIcon /></DockItem></div>
      <div className="ml-[36px] h-[122px] w-[2px] bg-[#5c2a42]" />
      <div className="ml-[53px]"><DockItem open={false}><TrashIcon /></DockItem></div>
    </div>
  );
}

function DesktopLabels() {
  return (
    <div className="absolute top-[2079px] left-[3097px] flex text-[24px] leading-[33px] font-semibold text-white [text-shadow:0_2px_4px_rgba(0,0,0,0.7)]">
      <div className="flex w-[225px] flex-col items-center">
        <Label className="w-[148px] tracking-[0.5px] text-[#dedcdc]">Screen Shot</Label>
        <Label className="w-[225px] tracking-[0.5px]">2023-01...14.21.55</Label>
      </div>
      <Label className="ml-[61px] w-[141px] tracking-[0.7px] text-[#dedcdc]">cover letter</Label>
    </div>
  );
}

export default function App() {
  return (
    <div className="relative h-[2240px] w-[3584px] overflow-hidden font-['Inter',sans-serif]">
      <Wallpaper />
      <EditorWindow />
      <BrowserWindow />
      <MenuBar />
      <DesktopLabels />
      <Callouts />
      <Dock />
    </div>
  );
}
